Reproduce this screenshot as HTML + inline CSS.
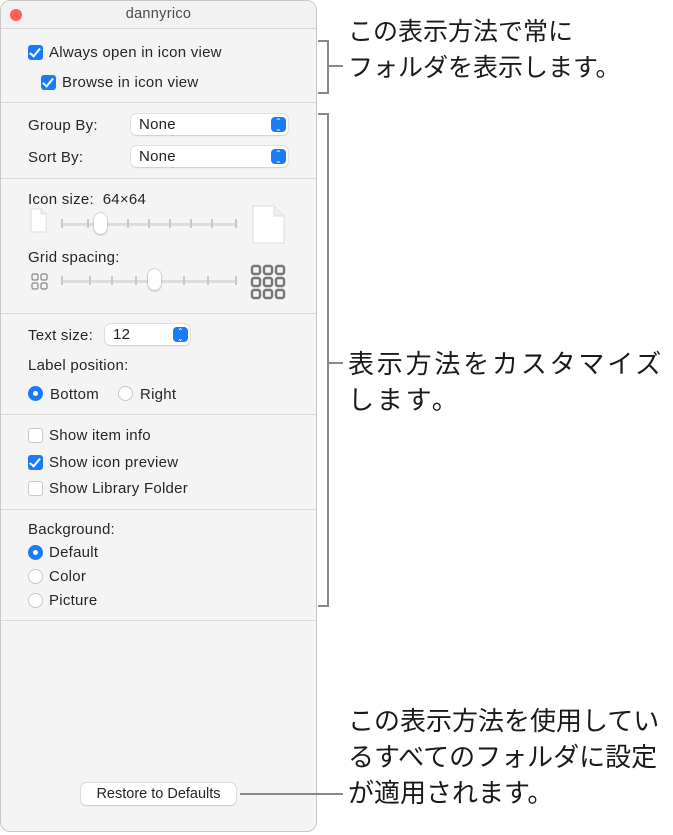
<!DOCTYPE html>
<html><head><meta charset="utf-8"><style>
*{margin:0;padding:0;box-sizing:border-box}
body{width:673px;height:835px;background:#fff;position:relative;font-family:"Liberation Sans","Noto Sans CJK JP",sans-serif;overflow:hidden;color:#222}
.win{position:absolute;left:0;top:0;width:317px;height:832px;border:1px solid #c8c8c8;border-radius:10px;background:#f4f4f4;overflow:hidden}
.title{height:28px;border-bottom:1px solid #d8d8d8;text-align:center;font-size:14.5px;line-height:27px;color:#4a4a4a;background:#f2f2f2;letter-spacing:.3px}
.red{position:absolute;left:9px;top:8px;width:12px;height:12px;border-radius:50%;background:#fe5f57}
.sep{position:absolute;left:0;width:316px;height:1px;background:#dadada}
.t{position:absolute;font-size:15px;letter-spacing:.25px;color:#262626;white-space:nowrap;margin-top:1px}
.cb{position:absolute;width:15px;height:15px;border-radius:3px}
.on{background:#1a7cf5}
.on::after{content:"";position:absolute;left:4px;top:1px;width:4px;height:9px;border:solid #fff;border-width:0 2px 2px 0;transform:rotate(40deg)}
.off{background:#fff;border:1px solid #c9c9c9}
.rb{position:absolute;width:15px;height:15px;border-radius:50%}
.rb.on{background:#1a7cf5}
.rb.on::after{content:"";position:absolute;left:5px;top:5px;width:5px;height:5px;border-radius:50%;background:#fff;border:none;transform:none}
.rb.off{background:#fff;border:1px solid #c9c9c9}
.pop{position:absolute;height:21px;background:#fff;border-radius:5px;box-shadow:0 0 0 .5px #ccc,0 1px 1px rgba(0,0,0,.15);font-size:15px;line-height:21px;padding-left:8px;letter-spacing:.25px}
.pop i{position:absolute;right:2px;top:3px;width:15px;height:15px;border-radius:4px;background:#1a7cf5;color:#fff;font-style:normal;font-size:8px;line-height:7px;text-align:center;padding-top:1px}
.track{position:absolute;height:3px;background:#ddd;border-radius:2px}
.tick{position:absolute;width:2px;height:9px;background:#c8c8c8}
.knob{position:absolute;width:13px;height:21px;background:#fff;border-radius:7px;box-shadow:0 0 0 .5px #bbb,0 1px 2px rgba(0,0,0,.25)}
.ann{position:absolute;font-size:26px;line-height:36px;color:#1a1a1a;white-space:nowrap;font-family:"Noto Sans CJK JP",sans-serif}
.ln{position:absolute;background:#888}
.btn{position:absolute;left:80px;top:782px;width:155px;height:22px;background:#fff;border-radius:5px;box-shadow:0 0 0 .5px #c4c4c4,0 1px 1px rgba(0,0,0,.15);font-size:14.5px;text-align:center;line-height:22px;color:#262626}
</style></head><body>
<div class="win">
<div class="title">dannyrico</div><div class="red"></div>
<div class="cb on" style="left:27px;top:44px"></div><div class="t" style="left:48px;top:42px">Always open in icon view</div>
<div class="cb on" style="left:40px;top:74px"></div><div class="t" style="left:61px;top:72px">Browse in icon view</div>
<div class="sep" style="top:101px"></div>
<div class="t" style="left:27px;top:115px">Group By:</div>
<div class="pop" style="left:130px;top:113px;width:157px">None<i>⌃<br>⌄</i></div>
<div class="t" style="left:27px;top:147px">Sort By:</div>
<div class="pop" style="left:130px;top:145px;width:157px">None<i>⌃<br>⌄</i></div>
<div class="sep" style="top:177px"></div>
<div class="t" style="left:27px;top:189px">Icon size:&nbsp;&nbsp;64×64</div>
<svg style="position:absolute;left:29px;top:207px" width="18" height="26"><path d="M1 1H11L16 6V24H1Z" fill="#fff" stroke="#ddd"/><path d="M11 1V6H16" fill="#eee" stroke="#ddd"/></svg>
<div class="track" style="left:60px;top:222px;width:176px"></div>
<div class="tick" style="left:60px;top:218px"></div><div class="tick" style="left:86px;top:218px"></div><div class="tick" style="left:126px;top:218px"></div><div class="tick" style="left:147px;top:218px"></div><div class="tick" style="left:168px;top:218px"></div><div class="tick" style="left:189px;top:218px"></div><div class="tick" style="left:210px;top:218px"></div><div class="tick" style="left:234px;top:218px"></div>
<div class="knob" style="left:93px;top:212px"></div>
<svg style="position:absolute;left:251px;top:204px" width="34" height="40"><path d="M1 1H22L32 11V38H1Z" fill="#fff" stroke="#ddd"/><path d="M22 1V11H32" fill="#eee" stroke="#ddd"/></svg>
<div class="t" style="left:27px;top:247px">Grid spacing:</div>
<svg style="position:absolute;left:30px;top:272px" width="17" height="17" fill="none" stroke="#888" stroke-width="1.2"><rect x="1" y="1" width="6" height="6" rx="1.5"/><rect x="10" y="1" width="6" height="6" rx="1.5"/><rect x="1" y="10" width="6" height="6" rx="1.5"/><rect x="10" y="10" width="6" height="6" rx="1.5"/></svg>
<div class="track" style="left:60px;top:279px;width:176px"></div>
<div class="tick" style="left:60px;top:275px"></div><div class="tick" style="left:88px;top:275px"></div><div class="tick" style="left:110px;top:275px"></div><div class="tick" style="left:134px;top:275px"></div><div class="tick" style="left:182px;top:275px"></div><div class="tick" style="left:206px;top:275px"></div><div class="tick" style="left:234px;top:275px"></div>
<div class="knob" style="left:147px;top:268px"></div>
<svg style="position:absolute;left:249px;top:263px" width="36" height="36" fill="none" stroke="#777" stroke-width="2.4"><rect x="2" y="2" width="8" height="8" rx="2"/><rect x="14" y="2" width="8" height="8" rx="2"/><rect x="26" y="2" width="8" height="8" rx="2"/><rect x="2" y="14" width="8" height="8" rx="2"/><rect x="14" y="14" width="8" height="8" rx="2"/><rect x="26" y="14" width="8" height="8" rx="2"/><rect x="2" y="26" width="8" height="8" rx="2"/><rect x="14" y="26" width="8" height="8" rx="2"/><rect x="26" y="26" width="8" height="8" rx="2"/></svg>
<div class="sep" style="top:312px"></div>
<div class="t" style="left:27px;top:325px">Text size:</div>
<div class="pop" style="left:104px;top:323px;width:85px">12<i>⌃<br>⌄</i></div>
<div class="t" style="left:27px;top:355px">Label position:</div>
<div class="rb on" style="left:27px;top:385px"></div><div class="t" style="left:49px;top:384px">Bottom</div>
<div class="rb off" style="left:117px;top:385px"></div><div class="t" style="left:139px;top:384px">Right</div>
<div class="sep" style="top:413px"></div>
<div class="cb off" style="left:27px;top:427px"></div><div class="t" style="left:48px;top:425px">Show item info</div>
<div class="cb on" style="left:27px;top:454px"></div><div class="t" style="left:48px;top:452px">Show icon preview</div>
<div class="cb off" style="left:27px;top:480px"></div><div class="t" style="left:48px;top:478px">Show Library Folder</div>
<div class="sep" style="top:508px"></div>
<div class="t" style="left:27px;top:519px">Background:</div>
<div class="rb on" style="left:27px;top:544px"></div><div class="t" style="left:48px;top:542px">Default</div>
<div class="rb off" style="left:27px;top:568px"></div><div class="t" style="left:48px;top:566px">Color</div>
<div class="rb off" style="left:27px;top:592px"></div><div class="t" style="left:48px;top:590px">Picture</div>
<div class="sep" style="top:619px"></div>
<div class="btn">Restore to Defaults</div>
</div>
<div class="ln" style="left:318px;top:40px;width:10px;height:2px"></div>
<div class="ln" style="left:327px;top:40px;width:2px;height:54px"></div>
<div class="ln" style="left:318px;top:92px;width:10px;height:2px"></div>
<div class="ln" style="left:327px;top:65px;width:16px;height:2px"></div>
<div class="ln" style="left:318px;top:113px;width:10px;height:2px"></div>
<div class="ln" style="left:327px;top:113px;width:2px;height:494px"></div>
<div class="ln" style="left:318px;top:605px;width:10px;height:2px"></div>
<div class="ln" style="left:327px;top:362px;width:16px;height:2px"></div>
<div class="ln" style="left:240px;top:793px;width:103px;height:2px"></div>
<div class="ann" style="left:348px;top:12px;font-size:25px">この表示方法で常に<br>フォルダを表示します。</div>
<div class="ann" style="left:348px;top:345px;letter-spacing:2.8px">表示方法をカスタマイズ<br>します。</div>
<div class="ann" style="left:348px;top:702px">この表示方法を使用してい<br>るすべてのフォルダに設定<br>が適用されます。</div>
</body></html>
